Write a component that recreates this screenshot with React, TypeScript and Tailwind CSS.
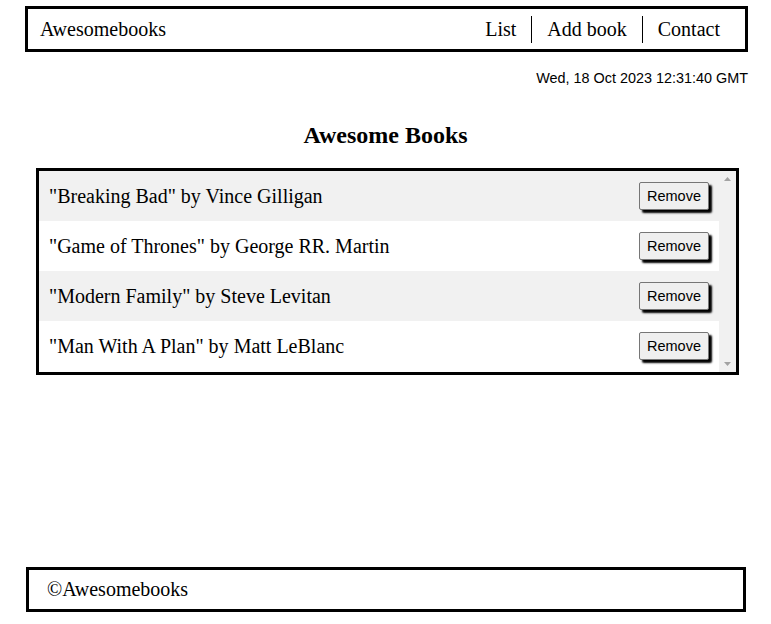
const books = [
  { title: "Breaking Bad", author: "Vince Gilligan" },
  { title: "Game of Thrones", author: "George RR. Martin" },
  { title: "Modern Family", author: "Steve Levitan" },
  { title: "Man With A Plan", author: "Matt LeBlanc" },
];

function Arrow({ down }: { down?: boolean }) {
  return (
    <svg width="7" height="4" viewBox="0 0 7 4" className={down ? "rotate-180" : ""}>
      <path d="M3.5 0 L7 4 L0 4 Z" fill="#a3a3a3" />
    </svg>
  );
}

export default function App() {
  return (
    <div className="flex min-h-screen flex-col bg-white font-['Liberation_Serif',serif] text-black">
      <header className="ml-[25px] mr-[23px] mt-[6px] flex h-[46px] items-center justify-between border-[3px] border-black pl-[12px] pr-[10px]">
        <a href="#" className="text-[20px] leading-[23px]">
          Awesomebooks
        </a>
        <nav className="flex items-center">
          <a href="#" className="px-[15px] text-[20px] leading-[27px]">
            List
          </a>
          <a href="#" className="border-l border-black px-[15px] text-[20px] leading-[27px]">
            Add book
          </a>
          <a href="#" className="border-l border-black px-[15px] text-[20px] leading-[27px]">
            Contact
          </a>
        </nav>
      </header>

      <p className="mr-[23px] mt-[18px] text-right font-['Liberation_Sans',sans-serif] text-[14.4px] leading-[16px]">
        Wed, 18 Oct 2023 12:31:40 GMT
      </p>

      <h2 className="mt-[35px] text-center text-[24px] font-bold leading-[28px]">Awesome Books</h2>

      <div className="ml-[36px] mt-[19px] flex h-[207px] w-[703px] overflow-hidden border-[3px] border-black">
        <ul className="flex-1">
          {books.map((b, i) => (
            <li
              key={b.title}
              className={`flex h-[50px] items-center justify-between pl-[10px] pr-[10px] ${
                i % 2 === 0 ? "bg-[#f1f1f1]" : "bg-white"
              }`}
            >
              <span className="text-[20px] leading-[23px]">
                "{b.title}" by {b.author}
              </span>
              <button className="h-[28px] rounded-[2px] border border-[#767676] bg-[#efefef] px-[7px] font-['Liberation_Sans',sans-serif] text-[14.5px] leading-[16px] shadow-[3px_3px_2px_#000]">
                Remove
              </button>
            </li>
          ))}
        </ul>
        <div className="flex w-[17px] flex-col items-center justify-between bg-[#f1f1f1] py-[6px]">
          <Arrow />
          <Arrow down />
        </div>
      </div>

      <footer className="mb-[12px] ml-[26px] mr-[25px] mt-auto flex h-[45px] items-center border-[3px] border-black pl-[18px]">
        <p className="text-[20px] leading-[23px]">©Awesomebooks</p>
      </footer>
    </div>
  );
}
